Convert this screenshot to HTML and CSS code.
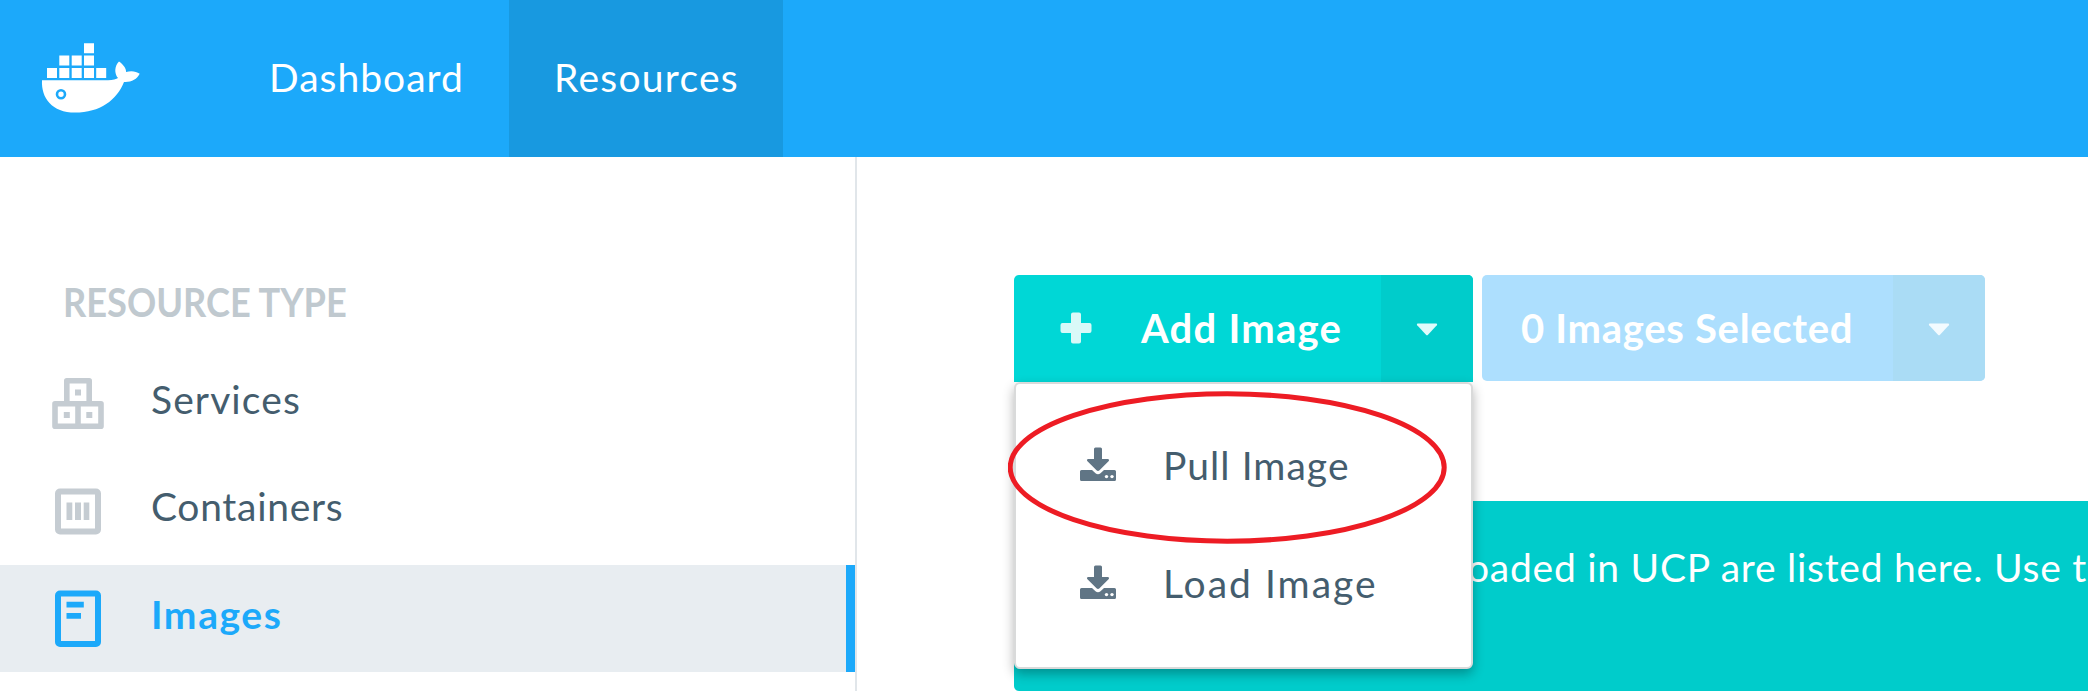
FILE: index.html
```html
<!DOCTYPE html>
<html lang="en">
<head>
<meta charset="utf-8">
<title>Images</title>
<link rel="stylesheet" href="styles.css">
</head>
<body>
<header class="topbar">
  <svg class="logo" width="100" height="72" viewBox="41 42 100 72" fill="#fff">
    <path d="M84 43.3h10v10H84zM59.3 55.6h10v10h-10zM71.7 55.6h10v10h-10zM84 55.6h10v10H84zM47 68h10v10H47zM59.3 68h10v10h-10zM71.7 68h10v10h-10zM84 68h10v10H84zM96.2 68h10v10h-10z"/>
    <path d="M42 80.2H108C113 80 116.500 79 118 78C114 73 114.500 66 119 61.400C124 65 126.500 69 126 72C131 70.500 136 71 139.700 73.800C137 79.500 131 82.500 124 82C117 100 100 112.600 75 112.600C52 112.600 41 98 42 80.200Z"/>
    <circle cx="61" cy="94.300" r="4" fill="#fff" stroke="#1ca9fa" stroke-width="2.600"/>
  </svg>
  <nav class="nav">
    <a class="nav-item"><span class="t-dash">Dashboard</span></a>
    <a class="nav-item active"><span class="t-res">Resources</span></a>
  </nav>
</header>
<div class="page">
  <aside class="sidebar">
    <h2 class="heading"><span class="t-type">RESOURCE TYPE</span></h2>
    <a class="row">
      <svg class="row-icon" width="52" height="60" viewBox="52 374 52 60" fill="none" stroke="#c5ccd2" stroke-width="5.600" stroke-linejoin="round">
        <path d="M66.800 403.800V380.800H89.200V403.800M55 403.800H101V426.200H55ZM78 403.800V426"/>
        <path d="M75 389.500h6v6h-6zM63.800 412h6v6h-6zM86.300 412h6v6h-6z" fill="#c5ccd2" stroke="none"/>
      </svg>
      <span class="t-serv">Services</span>
    </a>
    <a class="row">
      <svg class="row-icon" width="52" height="60" viewBox="52 481.500 52 60" fill="none">
        <rect x="58" y="491" width="40" height="40" rx="2" stroke="#c5ccd2" stroke-width="6"/>
        <path d="M66.500 502h5.800v17.500h-5.800zM75 502h6v17.500h-6zM83.700 502h5.600v17.500h-5.600z" fill="#c5ccd2"/>
      </svg>
      <span class="t-cont">Containers</span>
    </a>
    <a class="row selected">
      <svg class="row-icon" width="52" height="60" viewBox="52 589 52 60" fill="none">
        <rect x="58" y="593.500" width="40" height="50.500" rx="2" stroke="#1ca9fa" stroke-width="6"/>
        <path d="M66.500 601.700h17.300v5.800h-17.300zM66.500 613h14.500v5.800h-14.500z" fill="#1ca9fa"/>
      </svg>
      <span class="t-img">Images</span>
    </a>
  </aside>
  <main class="main">
    <div class="toolbar">
      <div class="dropdown">
        <div class="btn add">
          <div class="btn-main">
            <svg width="32" height="32" viewBox="0 0 32 32" fill="#d9f9f8"><path d="M13 .5h6q2 0 2 2V11h8.500q2 0 2 2v6q0 2-2 2H21v8.500q0 2-2 2h-6q-2 0-2-2V21H2.500q-2 0-2-2v-6q0-2 2-2H11V2.500q0-2 2-2z"/></svg>
            <span class="t-add">Add Image</span>
          </div>
          <div class="btn-caret"><svg width="22" height="13" viewBox="0 0 22 13" fill="#e0fbfb"><path d="M1.500.5h19q1.200.5.3 1.700L12 11.800q-1 1-2 0L1.200 2.200Q.3 1 1.500.5z"/></svg></div>
        </div>
        <div class="menu">
          <a class="menu-item">
            <svg width="37" height="35" viewBox="1080 446 37 35" fill="#607585"><path d="M1094 448q0-1.500 1.500-1.500h5q1.500 0 1.500 1.500v10h6q1.800.4.800 2l-9.300 9.300q-1.500 1.200-3 0l-9.300-9.300q-1-1.600.8-2h6z"/><path d="M1081.500 469h10.500l3.500 3.300q2.500 2 5 0l3.500-3.300h10.500q1.500 0 1.500 1.500v8q0 1.500-1.500 1.500h-33q-1.500 0-1.500-1.500v-8q0-1.500 1.500-1.500z"/><circle cx="1106.500" cy="475.600" r="1.700" fill="#fff"/><circle cx="1112" cy="475.600" r="1.700" fill="#fff"/></svg>
            <span class="t-pull">Pull Image</span>
          </a>
          <a class="menu-item">
            <svg width="37" height="35" viewBox="1080 446 37 35" fill="#607585"><path d="M1094 448q0-1.500 1.500-1.500h5q1.500 0 1.500 1.500v10h6q1.800.4.800 2l-9.300 9.300q-1.500 1.200-3 0l-9.300-9.300q-1-1.600.8-2h6z"/><path d="M1081.500 469h10.500l3.500 3.300q2.500 2 5 0l3.500-3.300h10.500q1.500 0 1.500 1.500v8q0 1.500-1.500 1.500h-33q-1.500 0-1.500-1.500v-8q0-1.500 1.500-1.500z"/><circle cx="1106.500" cy="475.600" r="1.700" fill="#fff"/><circle cx="1112" cy="475.600" r="1.700" fill="#fff"/></svg>
            <span class="t-load">Load Image</span>
          </a>
          <svg class="marker" width="440" height="153" viewBox="0 0 440 153" fill="none"><ellipse cx="219.200" cy="76.500" rx="217" ry="73.700" stroke="#ed1c24" stroke-width="5"/></svg>
        </div>
      </div>
      <div class="btn bulk">
        <div class="btn-main"><span class="t-sel">0 Images Selected</span></div>
        <div class="btn-caret"><svg width="22" height="13" viewBox="0 0 22 13" fill="#f3fbff"><path d="M1.500.5h19q1.200.5.3 1.700L12 11.800q-1 1-2 0L1.200 2.200Q.3 1 1.500.5z"/></svg></div>
      </div>
    </div>
    <div class="banner"><span class="t-ban">loaded in UCP are listed here. Use t</span></div>
  </main>
</div>
</body>
</html>
```
FILE: styles.css
```css
* { box-sizing: border-box; }

body {
  margin: 0;
  width: 2088px;
  height: 691px;
  overflow: hidden;
  display: flex;
  flex-direction: column;
  background: #fff;
  font-family: Lato, "Liberation Sans", sans-serif;
  font-size: 39px;
  line-height: 48px;
  color: #445d6e;
}

svg { display: block; flex: none; }
span { white-space: pre; }

.topbar {
  display: flex;
  height: 157px;
  flex: none;
  background: #1ca9fa;
}
.logo { margin: 42px 87px 0 41px; }
.nav { display: flex; color: #fff; }
.nav-item {
  display: flex;
  align-items: center;
  padding: 0 0 3px 41px;
  width: 281px;
}
.nav-item.active { width: 274px; padding-left: 45px; background: #1899e0; }
.t-dash { letter-spacing: 1px; }
.t-res { letter-spacing: 1.25px; }

.page { display: flex; flex: 1; min-height: 0; }
.sidebar {
  width: 857px;
  flex: none;
  border-right: 2px solid #e1e6ea;
  padding-top: 121px;
}
.heading {
  margin: 0;
  height: 71.500px;
  padding-left: 63px;
  font-size: 40px;
  font-weight: 700;
  color: #c0c9cf;
}
.t-type {
  display: inline-block;
  transform: scaleX(.905);
  transform-origin: 0 50%;
}
.row {
  display: flex;
  align-items: center;
  height: 107.500px;
  padding: 0 0 9px 52px;
  gap: 47px;
}
.row-icon { margin-top: 11px; }
.selected {
  background: #e8edf1;
  border-right: 9px solid #1ca9fa;
  color: #1ca9fa;
  font-weight: 700;
}
.t-serv { letter-spacing: 1.1px; }
.t-cont { letter-spacing: .7px; }
.t-img { letter-spacing: 1.6px; }

.main { flex: 1; min-width: 0; padding: 118px 0 0 157px; }
.toolbar { display: flex; gap: 9px; height: 226px; align-items: flex-start; }
.dropdown { position: relative; }
.btn {
  display: flex;
  height: 107px;
  color: #fff;
  font-weight: 700;
  font-size: 40px;
  border-radius: 5px;
  overflow: hidden;
}
.btn-main, .btn-caret { display: flex; align-items: center; padding-bottom: 2px; }
.btn-caret { justify-content: center; padding: 2px 0 0; }
.add { width: 459px; background: #00d7d6; border-radius: 5px 5px 0 0; }
.add .btn-main { width: 367px; padding-left: 46px; gap: 49px; }
.add .btn-caret { flex: 1; background: #00cccb; }
.bulk { width: 503px; height: 106px; background: #addffe; }
.bulk .btn-main { width: 411px; padding: 0 0 0 39px; }
.bulk .btn-caret { flex: 1; background: #aadcf5; }
.t-add { letter-spacing: 1.25px; }
.t-sel { letter-spacing: .7px; }

.menu {
  position: absolute;
  top: 107px;
  left: 0;
  width: 459px;
  height: 287px;
  padding: 21px 0 0 64px;
  background: #fff;
  border: 2px solid #d9dada;
  border-radius: 6px;
  box-shadow: 0 5px 12px rgba(0, 0, 0, .3);
}
.menu-item { display: flex; align-items: center; height: 118.500px; gap: 46px; }
.menu-item span { padding-top: 1px; }
.t-pull { letter-spacing: 1.05px; }
.t-load { letter-spacing: 2px; }
.marker { position: absolute; left: -8px; top: 7px; }

.banner {
  height: 190px;
  padding: 42px 0 0 443px;
  background: #00cccb;
  border-radius: 0 0 0 5px;
  color: #fff;
  overflow: hidden;
}
.t-ban { letter-spacing: .75px; }
```
